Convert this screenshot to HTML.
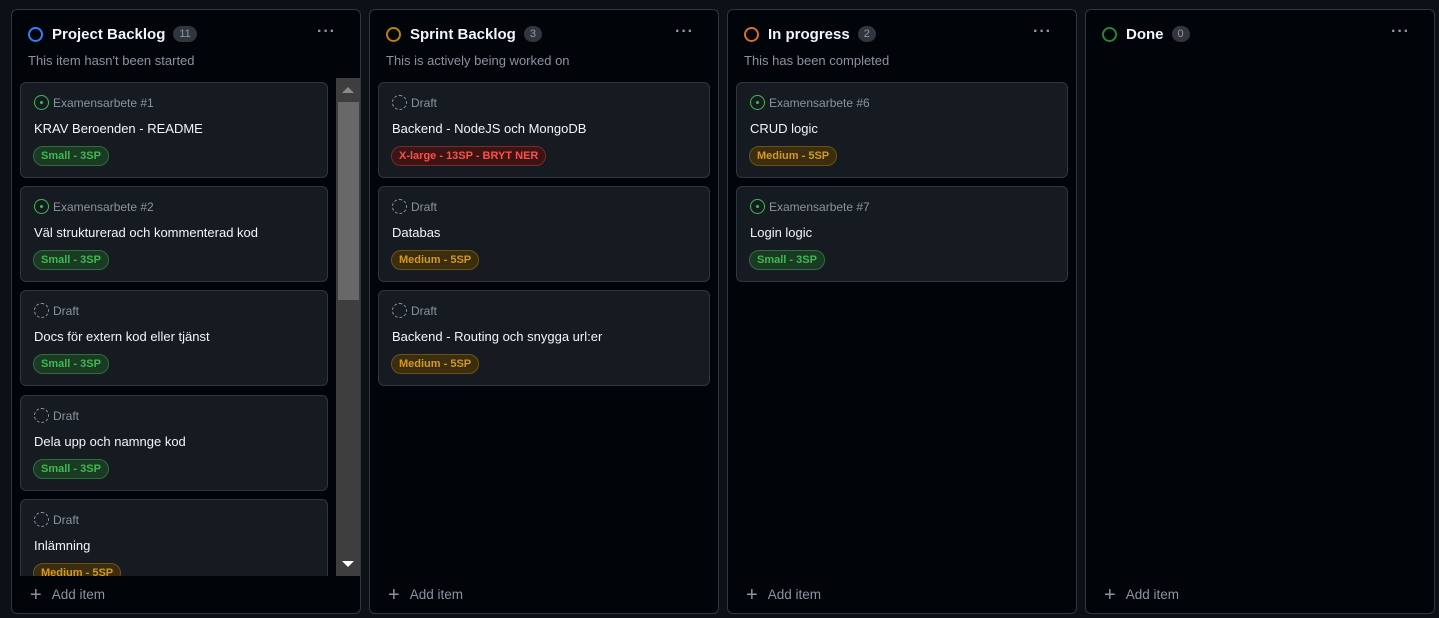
<!DOCTYPE html><html><head><style>
*{box-sizing:border-box;margin:0;padding:0}
body{width:1439px;height:618px;background:#0d1117;font-family:"Liberation Sans",sans-serif;position:relative;overflow:hidden;color:#e6edf3}
.col{position:absolute;top:9px;width:350px;height:605px;background:#010409;border:1px solid #30363d;border-radius:6px;overflow:hidden}
.hd{position:absolute;left:16px;top:14px;height:20px;display:flex;align-items:center}
.circ{width:15px;height:15px;border-radius:50%;border:2px solid;margin-right:9px}
.t{font-weight:bold;font-size:15px;color:#f0f6fc}
.cnt{margin-left:8px;background:#30363d;color:#9198a1;font-size:11px;border-radius:10px;padding:2px 6px;line-height:12px}
.sub{position:absolute;left:16px;top:43px;font-size:13px;color:#8b949e}
.dots{position:absolute;right:24px;top:13px;color:#9198a1;font-size:16px;letter-spacing:1px;font-weight:bold}
.card{position:absolute;left:8px;height:96px;background:#161b22;border:1px solid #30363d;border-radius:6px}
.meta{position:absolute;left:13px;top:12px;display:flex;align-items:center;font-size:12px;color:#8b949e}
.ic{width:15px;height:15px;border-radius:50%;margin-right:4px;position:relative}
.open{border:1.5px solid #3fb950}
.open::after{content:"";position:absolute;left:4.5px;top:4.5px;width:3px;height:3px;border-radius:50%;background:#3fb950}
.draft{border:1.5px dashed #8b949e}
.ttl{position:absolute;left:13px;top:38px;font-size:13px;color:#f0f6fc}
.lab{position:absolute;left:12px;top:63px;font-size:11px;font-weight:bold;border-radius:10px;padding:2px 7px;line-height:14px}
.g{color:#3fb950;background:#1b3a24;border:1px solid #2c6e3a}
.o{color:#d29922;background:#3b2d0d;border:1px solid #6b5214}
.r{color:#f85149;background:#3d1414;border:1px solid #7a2a28}
.add{position:absolute;left:18px;bottom:11px;font-size:13.5px;color:#8b949e;display:flex;align-items:center}
.add b{font-weight:normal;font-size:20px;margin-right:10px;line-height:14px}
</style></head><body>

<div class="col" style="left:11px">
<div class="hd"><div class="circ" style="border-color:#2f81f7"></div><span class="t">Project Backlog</span><span class="cnt">11</span></div>
<div class="sub">This item hasn't been started</div><div class="dots">···</div>
<div style="position:absolute;left:0;top:0;width:350px;height:566px;overflow:hidden">
<div class="card" style="top:72px;width:308px"><div class="meta"><div class="ic open"></div>Examensarbete #1</div><div class="ttl">KRAV Beroenden - README</div><div class="lab g">Small - 3SP</div></div>
<div class="card" style="top:176px;width:308px"><div class="meta"><div class="ic open"></div>Examensarbete #2</div><div class="ttl">Väl strukturerad och kommenterad kod</div><div class="lab g">Small - 3SP</div></div>
<div class="card" style="top:280px;width:308px"><div class="meta"><div class="ic draft"></div>Draft</div><div class="ttl">Docs för extern kod eller tjänst</div><div class="lab g">Small - 3SP</div></div>
<div class="card" style="top:385px;width:308px"><div class="meta"><div class="ic draft"></div>Draft</div><div class="ttl">Dela upp och namnge kod</div><div class="lab g">Small - 3SP</div></div>
<div class="card" style="top:489px;width:308px"><div class="meta"><div class="ic draft"></div>Draft</div><div class="ttl">Inlämning</div><div class="lab o">Medium - 5SP</div></div>
<div style="position:absolute;left:324px;top:68px;width:25px;height:498px;background:#3e3e3e">
<div style="position:absolute;left:2px;top:24px;width:21px;height:198px;background:#686868"></div>
<div style="position:absolute;left:6px;top:9px;border-left:6px solid transparent;border-right:6px solid transparent;border-bottom:6px solid #8a8a8a"></div>
<div style="position:absolute;left:6px;bottom:9px;border-left:6px solid transparent;border-right:6px solid transparent;border-top:6px solid #fff"></div>
</div></div>
<div class="add"><b>+</b>Add item</div>
</div>

<div class="col" style="left:369px">
<div class="hd"><div class="circ" style="border-color:#bb8009"></div><span class="t">Sprint Backlog</span><span class="cnt">3</span></div>
<div class="sub">This is actively being worked on</div><div class="dots">···</div>
<div class="card" style="top:72px;width:332px"><div class="meta"><div class="ic draft"></div>Draft</div><div class="ttl">Backend - NodeJS och MongoDB</div><div class="lab r">X-large - 13SP - BRYT NER</div></div>
<div class="card" style="top:176px;width:332px"><div class="meta"><div class="ic draft"></div>Draft</div><div class="ttl">Databas</div><div class="lab o">Medium - 5SP</div></div>
<div class="card" style="top:280px;width:332px"><div class="meta"><div class="ic draft"></div>Draft</div><div class="ttl">Backend - Routing och snygga url:er</div><div class="lab o">Medium - 5SP</div></div>
<div class="add"><b>+</b>Add item</div>
</div>

<div class="col" style="left:727px">
<div class="hd"><div class="circ" style="border-color:#db6d28"></div><span class="t">In progress</span><span class="cnt">2</span></div>
<div class="sub">This has been completed</div><div class="dots">···</div>
<div class="card" style="top:72px;width:332px"><div class="meta"><div class="ic open"></div>Examensarbete #6</div><div class="ttl">CRUD logic</div><div class="lab o">Medium - 5SP</div></div>
<div class="card" style="top:176px;width:332px"><div class="meta"><div class="ic open"></div>Examensarbete #7</div><div class="ttl">Login logic</div><div class="lab g">Small - 3SP</div></div>
<div class="add"><b>+</b>Add item</div>
</div>

<div class="col" style="left:1085px">
<div class="hd"><div class="circ" style="border-color:#238636"></div><span class="t">Done</span><span class="cnt">0</span></div>
<div class="dots">···</div>
<div class="add"><b>+</b>Add item</div>
</div>
</body></html>
